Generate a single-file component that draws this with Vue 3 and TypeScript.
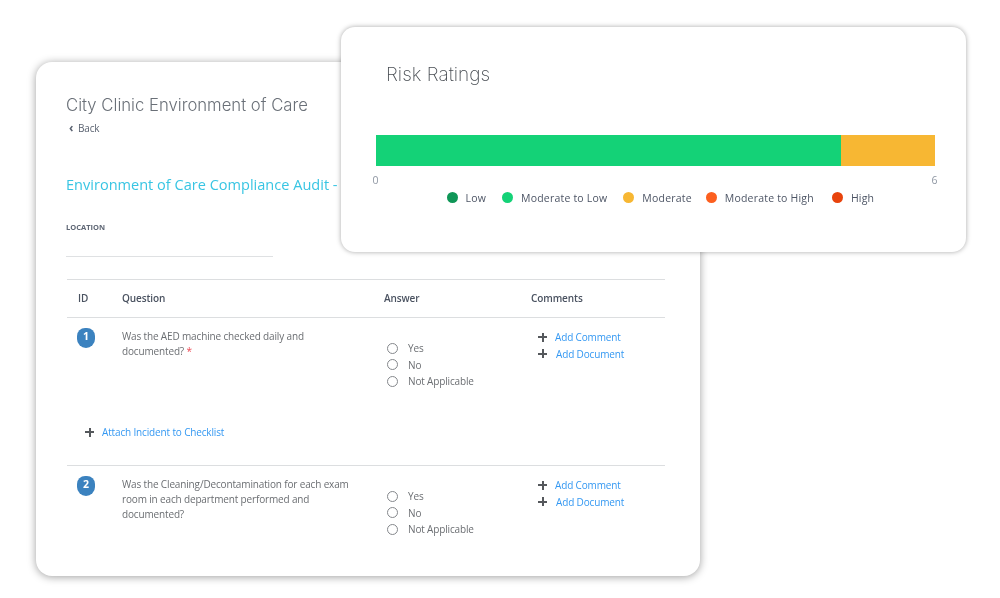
<script setup lang="ts">
interface Question {
  id: number
  lines: string[]
  required: boolean
}

const questions: Question[] = [
  { id: 1, lines: ['Was the AED machine checked daily and', 'documented?'], required: true },
  {
    id: 2,
    lines: ['Was the Cleaning/Decontamination for each exam', 'room in each department performed and', 'documented?'],
    required: false,
  },
]

const answers = ['Yes', 'No', 'Not Applicable']

const legend = [
  { label: 'Low', color: '#0f9657' },
  { label: 'Moderate to Low', color: '#14d277' },
  { label: 'Moderate', color: '#f7b733' },
  { label: 'Moderate to High', color: '#fc5f1f' },
  { label: 'High', color: '#e8430c' },
]
</script>

<template>
  <main class="page">
    <section class="audit">
      <h1 class="audit-title">City Clinic Environment of Care</h1>
      <a class="back"><span class="chev">‹</span>Back</a>
      <h2 class="audit-sub">Environment of Care Compliance Audit -</h2>
      <div class="location">LOCATION</div>
      <div class="location-input"></div>

      <div class="table">
        <div class="row head">
          <div>ID</div>
          <div>Question</div>
          <div>Answer</div>
          <div>Comments</div>
        </div>

        <div v-for="q in questions" :key="q.id" class="item">
          <div class="row body">
            <div><span class="badge">{{ q.id }}</span></div>
            <div class="question">
              <div v-for="(line, i) in q.lines" :key="i">
                {{ line }}<span v-if="q.required && i === q.lines.length - 1" class="req"> *</span>
              </div>
            </div>
            <div class="answers">
              <label v-for="a in answers" :key="a" class="answer"><span class="radio"></span>{{ a }}</label>
            </div>
            <div class="comments">
              <a class="action"><span class="plus"></span>Add Comment</a>
              <a class="action doc"><span class="plus"></span>Add Document</a>
            </div>
          </div>
          <a v-if="q.id === 1" class="action attach"><span class="plus"></span>Attach Incident to Checklist</a>
        </div>
      </div>
    </section>

    <section class="risk">
      <h2 class="risk-title">Risk Ratings</h2>
      <div class="bar">
        <div class="seg green"></div>
        <div class="seg amber"></div>
      </div>
      <div class="axis"><span>0</span><span>6</span></div>
      <ul class="legend">
        <li v-for="l in legend" :key="l.label">
          <span class="dot" :style="{ background: l.color }"></span>{{ l.label }}
        </li>
      </ul>
    </section>
  </main>
</template>

<style>
html, body { margin: 0; background: #fff; }
</style>

<style scoped>
.page {
  position: relative;
  width: 1000px;
  height: 598px;
  padding: 62px 0 0 36px;
  box-sizing: border-box;
  overflow: hidden;
  font-family: "Open Sans", "Liberation Sans", sans-serif;
  background: #fff;
  filter: blur(0.35px);
}
.audit {
  width: 664px;
  height: 514px;
  box-sizing: border-box;
  padding: 31px 35px 0 30px;
  background: #fff;
  border-radius: 16px;
  box-shadow: 0 1px 9px rgba(0, 0, 0, 0.38);
}
.audit-title {
  margin: 0;
  font: 300 16.7px/24px Inter, "Open Sans", sans-serif;
  color: #6a7078;
}
.back {
  display: flex;
  align-items: center;
  height: 16px;
  margin-top: 3px;
  padding-left: 3px;
  font-size: 10px;
  letter-spacing: -0.15px;
  color: #5a6270;
}
.chev { width: 9px; font-size: 12px; line-height: 14px; font-weight: 700; }
.audit-sub {
  margin: 36px 0 0;
  font: 400 14.55px/24px "Open Sans", sans-serif;
  color: #38c5e3;
  white-space: nowrap;
}
.location {
  margin-top: 25px;
  font-size: 7.5px;
  line-height: 12px;
  font-weight: 700;
  color: #5f6775;
}
.location-input {
  width: 207px;
  height: 23px;
  border-bottom: 1px solid #dfe1e3;
}
.table {
  width: 598px;
  margin: 22px 0 0 1px;
  border-top: 1px solid #dcdee0;
}
.row {
  display: grid;
  grid-template-columns: 55px 262px 147px 1fr;
}
.head {
  height: 36px;
  padding-bottom: 1px;
  align-items: center;
  border-bottom: 1px solid #dcdee0;
  font-size: 10px;
  letter-spacing: -0.1px;
  font-weight: 600;
  color: #4a5260;
}
.head > :first-child { padding-left: 11px; }
.item { height: 147px; }
.item + .item { border-top: 1px solid #dcdee0; }
.body {
  height: 100px;
  padding-top: 10px;
  box-sizing: border-box;
  font-size: 10px;
  letter-spacing: -0.15px;
  color: #6b6e72;
}
.badge {
  display: block;
  width: 18px;
  height: 20px;
  margin: 0 0 0 10px;
  border-radius: 9px 9px 10px 10px;
  background: #3b82bf;
  color: #fff;
  font-size: 10.5px;
  font-weight: 700;
  line-height: 17px;
  text-align: center;
}
.question { line-height: 15px; padding-top: 1px; white-space: nowrap; }
.req { color: #ec4a55; }
.answers {
  display: flex;
  flex-direction: column;
  padding-top: 12px;
}
.answer {
  display: flex;
  align-items: center;
  height: 16.5px;
  padding-left: 3px;
}
.radio {
  width: 9px;
  height: 9px;
  margin-right: 10px;
  border: 1.2px solid #85888c;
  border-radius: 50%;
  flex: none;
}
.comments {
  display: flex;
  flex-direction: column;
  padding-left: 7px;
  padding-top: 1px;
}
.action {
  display: flex;
  align-items: center;
  height: 16.6px;
  font-size: 10px;
  letter-spacing: -0.15px;
  color: #3498f2;
  white-space: nowrap;
}
.plus {
  width: 9px;
  height: 9px;
  margin-right: 8px;
  flex: none;
  background:
    linear-gradient(#55585c, #55585c) center / 9px 2px no-repeat,
    linear-gradient(#55585c, #55585c) center / 2px 9px no-repeat;
}
.doc .plus { margin-right: 9px; }
.attach {
  margin: 6px 0 0 18px;
}
.risk {
  position: absolute;
  left: 341px;
  top: 27px;
  width: 625px;
  height: 225px;
  box-sizing: border-box;
  padding: 35px 31.5px 0 34.5px;
  background: #fff;
  border-radius: 14px;
  box-shadow: 0 0 5px rgba(0, 0, 0, 0.35);
}
.risk-title {
  margin: 0 0 0 10.5px;
  font: 200 19px/26px Inter, "Open Sans", sans-serif;
  color: #4a4f55;
}
.bar {
  display: flex;
  height: 30.5px;
  margin-top: 47px;
}
.seg { height: 100%; }
.green { width: 465.5px; background: #14d277; }
.amber { flex: 1; background: #f7b733; }
.axis {
  display: flex;
  justify-content: space-between;
  margin: 7px -3px 0;
  font-size: 10.5px;
  line-height: 14px;
  color: #8f97a3;
}
.legend {
  display: flex;
  margin: 3px 0 0 71px;
  padding: 0;
  list-style: none;
  font-size: 10.5px;
  line-height: 16px;
  letter-spacing: 0.2px;
  color: #4d5565;
}
.legend li { display: flex; align-items: center; margin-right: 16px; }
.legend li:nth-child(3) { margin-right: 14px; }
.legend li:nth-child(4) { margin-right: 18px; }
.dot {
  width: 11px;
  height: 11px;
  margin-right: 8px;
  border-radius: 50%;
  flex: none;
}
</style>
